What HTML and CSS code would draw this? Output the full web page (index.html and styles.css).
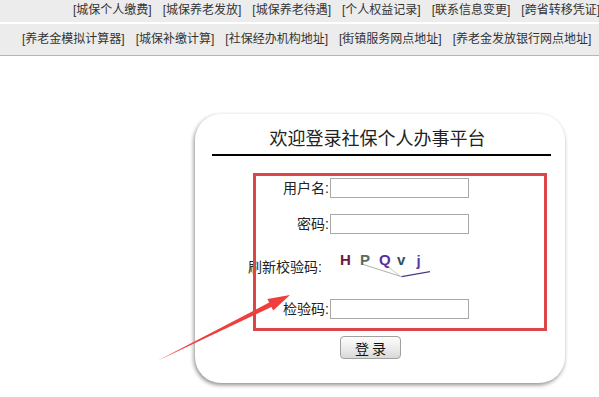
FILE: index.html
```html
<!DOCTYPE html>
<html lang="zh-CN">
<head>
<meta charset="utf-8">
<title>欢迎登录社保个人办事平台</title>
<link rel="stylesheet" href="styles.css">
</head>
<body>
<div class="nav nav1">
  <a>[城保个人缴费]</a><a>[城保养老发放]</a><a>[城保养老待遇]</a><a>[个人权益记录]</a><a>[联系信息变更]</a><a>[跨省转移凭证]</a>
</div>
<div class="nav nav2">
  <a>[养老金模拟计算器]</a><a>[城保补缴计算]</a><a>[社保经办机构地址]</a><a>[街镇服务网点地址]</a><a>[养老金发放银行网点地址]</a>
</div>
<div class="card">
  <div class="title">欢迎登录社保个人办事平台</div>
  <div class="form">
    <div class="row"><label>用户名:</label><input class="field" type="text"></div>
    <div class="row"><label>密码:</label><input class="field" type="password"></div>
    <div class="row captcha"><label>刷新校验码:</label>
      <svg class="code" width="100" height="30" viewBox="0 0 100 30">
        <line x1="26.7" y1="14" x2="66.7" y2="26.7" stroke="#9a9a9a" stroke-width="0.8"/>
        <line x1="52" y1="16" x2="65" y2="26" stroke="#b0b0b0" stroke-width="0.7"/>
        <line x1="66.7" y1="26.7" x2="95" y2="21.7" stroke="#4a3a8a" stroke-width="1.2"/>
        <text x="5" y="14.5" fill="#6b1a3e" class="ch">H</text>
        <text x="25" y="14.5" fill="#5d6b5d" class="ch">P</text>
        <text x="44" y="14.5" fill="#5b2fa0" class="ch">Q</text>
        <text x="62" y="14.5" fill="#2f4f60" class="ch">v</text>
        <text x="81.5" y="15.5" fill="#5a3a9a" class="ch">j</text>
      </svg>
    </div>
    <div class="row last"><label>检验码:</label><input class="field" type="text"></div>
    <div class="actions"><button class="btn" type="button">登 录</button></div>
  </div>
</div>
<div class="mark"></div>
<svg class="arrow" width="599" height="397" viewBox="0 0 599 397">
  <polygon points="157,361 269.2,302.6 267.4,299 290,295 273.2,310.6 271.4,307" fill="#ee3f3f"/>
</svg>
</body>
</html>
```

FILE: styles.css
```css
html, body {
  margin: 0;
  padding: 0;
  background: #fff;
}
body {
  font-family: "Liberation Sans", "Noto Sans CJK SC", sans-serif;
  color: #222;
  width: 599px;
  height: 397px;
  overflow: hidden;
}
.nav {
  display: flex;
  gap: 11px;
  white-space: nowrap;
  overflow: hidden;
  background: #ececec;
  font-size: 12px;
  color: #333;
}
.nav a {
  flex-shrink: 0;
}
.nav1 {
  height: 22px;
  line-height: 20px;
  padding-left: 73px;
  margin-bottom: 2px;
}
.nav2 {
  height: 31px;
  line-height: 31px;
  padding-left: 22px;
  border-bottom: 1px solid #b5b5b5;
}
.card {
  box-sizing: border-box;
  width: 370px;
  margin: 58px 0 0 195px;
  padding: 13px 14px 24px 17px;
  background: #fff;
  border-radius: 26px;
  box-shadow: -1px 2px 4px rgba(0, 0, 0, 0.45);
}
.title {
  font-size: 18px;
  line-height: 24px;
  text-align: center;
  color: #222;
  padding: 0 8px 3px 0;
  border-bottom: 2px solid #000;
}
.form {
  margin-top: 22px;
}
.row {
  display: flex;
  align-items: center;
  height: 20px;
  margin-bottom: 16px;
}
.row label {
  width: 117px;
  margin-right: 1px;
  text-align: right;
  font-size: 14px;
  line-height: 20px;
  color: #222;
}
.field {
  box-sizing: border-box;
  width: 139px;
  height: 20px;
  margin: 0;
  padding: 0;
  border: 1px solid #a8a8a8;
  background: #fff;
}
.row.captcha {
  height: 27px;
  align-items: flex-end;
  margin-bottom: 22px;
}
.row.captcha label {
  width: 110px;
  margin-right: 0;
}
.code {
  display: block;
  margin: 0 0 -3px 13px;
  align-self: flex-start;
}
.ch {
  font-family: "Liberation Sans", sans-serif;
  font-size: 15px;
  font-weight: bold;
}
.row.last {
  margin-bottom: 17px;
}
.actions {
  padding-left: 128px;
}
.btn {
  box-sizing: border-box;
  width: 61px;
  height: 23px;
  padding: 0;
  border: 1px solid #a0a0a0;
  border-radius: 4px;
  background: linear-gradient(#fdfdfd, #e9e9e9 60%, #d8d8d8);
  font-family: "Noto Sans CJK SC", sans-serif;
  font-size: 14px;
  line-height: 20px;
  color: #111;
}
.mark {
  position: absolute;
  left: 253px;
  top: 173px;
  width: 294px;
  height: 158px;
  box-sizing: border-box;
  border: 3px solid #dc4646;
}
.arrow {
  position: absolute;
  left: 0;
  top: 0;
}
```
